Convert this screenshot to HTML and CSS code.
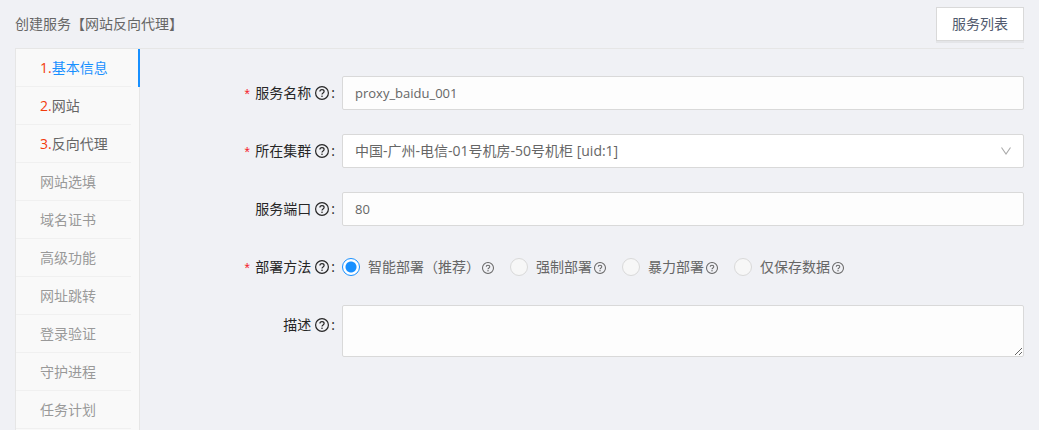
FILE: index.html
```html
<!DOCTYPE html>
<html lang="zh-CN">
<head>
<meta charset="utf-8">
<title>创建服务</title>
<link rel="stylesheet" href="styles.css">
</head>
<body>
<svg class="sprite" aria-hidden="true">
  <symbol id="help" viewBox="0 0 14 14">
    <circle cx="7" cy="7" r="6.4" fill="none" stroke="currentColor" stroke-width="1.2"/>
    <path d="M4.9 5.6C4.9 4.300 5.800 3.700 7 3.700s2.100.7 2.100 1.800C9.100 7 7 6.900 7 8.500" fill="none" stroke="currentColor" stroke-width="1.2"/>
    <circle cx="7" cy="10.200" r=".8" fill="currentColor"/>
  </symbol>
</svg>
<div class="page">
  <header class="header">
    <h1 class="title">创建服务【网站反向代理】</h1>
    <button class="list-button" type="button">服务列表</button>
  </header>
  <div class="body">
    <nav class="nav">
      <a class="nav-item active" href="#basic"><span class="step">1.</span>基本信息</a>
      <a class="nav-item" href="#site"><span class="step">2.</span>网站</a>
      <a class="nav-item" href="#proxy"><span class="step">3.</span>反向代理</a>
      <a class="nav-item optional" href="#options">网站选填</a>
      <a class="nav-item optional" href="#cert">域名证书</a>
      <a class="nav-item optional" href="#advanced">高级功能</a>
      <a class="nav-item optional" href="#redirect">网址跳转</a>
      <a class="nav-item optional" href="#login">登录验证</a>
      <a class="nav-item optional" href="#daemon">守护进程</a>
      <a class="nav-item optional" href="#tasks">任务计划</a>
    </nav>
    <form class="form">
      <div class="row">
        <label class="label required" for="name">服务名称<svg class="label-icon"><use href="#help"/></svg><span class="colon">:</span></label>
        <input class="control" id="name" type="text" value="proxy_baidu_001">
      </div>
      <div class="row">
        <label class="label required" for="cluster">所在集群<svg class="label-icon"><use href="#help"/></svg><span class="colon">:</span></label>
        <div class="select-wrap">
          <select class="control select" id="cluster"><option>中国-广州-电信-01号机房-50号机柜 [uid:1]</option></select>
          <svg class="chevron" viewBox="0 0 12 12"><path d="M1.500 2.500 6 9l4.500-6.500" fill="none" stroke="currentColor" stroke-width="1.100"/></svg>
        </div>
      </div>
      <div class="row">
        <label class="label" for="port">服务端口<svg class="label-icon"><use href="#help"/></svg><span class="colon">:</span></label>
        <input class="control" id="port" type="text" value="80">
      </div>
      <div class="row">
        <span class="label required" id="method">部署方法<svg class="label-icon"><use href="#help"/></svg><span class="colon">:</span></span>
        <div class="radios" role="radiogroup" aria-labelledby="method">
          <label class="choice"><input class="radio" type="radio" name="method" checked><span>智能部署（推荐）</span><svg class="choice-icon" viewBox="0 0 14 14"><use href="#help" width="14" height="14"/></svg></label>
          <label class="choice"><input class="radio" type="radio" name="method"><span>强制部署</span><svg class="choice-icon" viewBox="0 0 14 14"><use href="#help" width="14" height="14"/></svg></label>
          <label class="choice"><input class="radio" type="radio" name="method"><span>暴力部署</span><svg class="choice-icon" viewBox="0 0 14 14"><use href="#help" width="14" height="14"/></svg></label>
          <label class="choice"><input class="radio" type="radio" name="method"><span>仅保存数据</span><svg class="choice-icon" viewBox="0 0 14 14"><use href="#help" width="14" height="14"/></svg></label>
        </div>
      </div>
      <div class="row row-text">
        <label class="label" for="description">描述<svg class="label-icon"><use href="#help"/></svg><span class="colon">:</span></label>
        <textarea class="control textarea" id="description"></textarea>
      </div>
    </form>
  </div>
</div>
</body>
</html>
```
FILE: styles.css
```css
* {
  box-sizing: border-box;
}

body {
  margin: 0;
  background: #f0f1f5;
  color: #666;
  font: 14px/22px "Open Sans", "Noto Sans CJK SC", sans-serif;
}

input,
select,
textarea,
button {
  font: inherit;
  color: inherit;
}

.sprite {
  position: absolute;
  width: 0;
  height: 0;
}

.page {
  display: flex;
  flex-direction: column;
  min-height: 100vh;
  padding: 0 15px;
}

.header {
  display: flex;
  align-items: center;
  justify-content: space-between;
  padding: 7px 0;
  border-bottom: 1px solid #e6e6e6;
}

.title {
  margin: 0;
  font-size: 14px;
  font-weight: 400;
}

.list-button {
  height: 34px;
  padding: 0 15px;
  border: 1px solid #d9d9d9;
  background: #fff;
  box-shadow: 0 2px 0 #e4e5e8;
  color: #515a6e;
  line-height: 32px;
}

.body {
  display: flex;
  flex: 1;
}

.nav {
  flex: none;
  width: 125px;
  padding-right: 8px;
  border: solid #e6e6e6;
  border-width: 0 1px;
  background: #f9f9f9;
}

.nav-item {
  display: block;
  height: 38px;
  padding-left: 24px;
  border-bottom: 1px solid #f0f0f0;
  color: #666;
  line-height: 38px;
  text-decoration: none;
}

.nav-item.optional {
  color: #999;
}

.nav-item.active {
  margin-right: -9px;
  border-right: 2px solid #1890ff;
  border-bottom: 0;
  background: linear-gradient(#f0f0f0, #f0f0f0) 0 100% / 115px 1px no-repeat;
  color: #1890ff;
}

.step {
  color: #f23c0d;
}

.active .step {
  font-weight: 500;
}

.form {
  display: flex;
  flex: 1;
  flex-direction: column;
  gap: 24px;
  padding-top: 27px;
}

.row {
  display: grid;
  grid-template-columns: 202px minmax(0, 1fr);
}

.row-text {
  margin-top: -3px;
}

.label {
  display: flex;
  align-items: center;
  justify-content: flex-end;
  height: 34px;
  padding-right: 7px;
  color: #262626;
}

.row-text .label {
  height: 40px;
}

.required::before {
  content: "*";
  margin-right: 4px;
  padding-top: 6px;
  color: #f5222d;
  font-family: "Liberation Mono", monospace;
  font-size: 14px;
  line-height: 14px;
}

.label-icon {
  width: 14px;
  height: 14px;
  margin: 0 2px 0 4px;
}

.control {
  display: block;
  width: 100%;
  height: 34px;
  margin: 0;
  padding: 0 12px;
  border: 1px solid #d9d9d9;
  border-radius: 2px;
  background: #fdfdfd;
  font-size: 13px;
  outline: 0;
}

.select-wrap {
  position: relative;
}

.select {
  appearance: none;
  background: #fff;
  font-size: 14px;
}

.chevron {
  position: absolute;
  top: 11px;
  right: 12px;
  width: 12px;
  height: 12px;
  color: #aaa;
  pointer-events: none;
}

.textarea {
  height: 52px;
  padding: 5px 12px;
  resize: vertical;
}

.radios {
  display: flex;
  align-items: center;
  gap: 16px;
}

.choice {
  display: flex;
  align-items: center;
}

.radio {
  appearance: none;
  width: 18px;
  height: 18px;
  margin: 0 8px 0 0;
  border: 1px solid #d9d9d9;
  border-radius: 50%;
  background: #f7f7f7;
}

.radio:checked {
  border-color: #1890ff;
  background: radial-gradient(circle, #1890ff 5px, #fff 6px);
}

.choice-icon {
  width: 12px;
  height: 12px;
  margin: 2px 0 0 2px;
}
```
